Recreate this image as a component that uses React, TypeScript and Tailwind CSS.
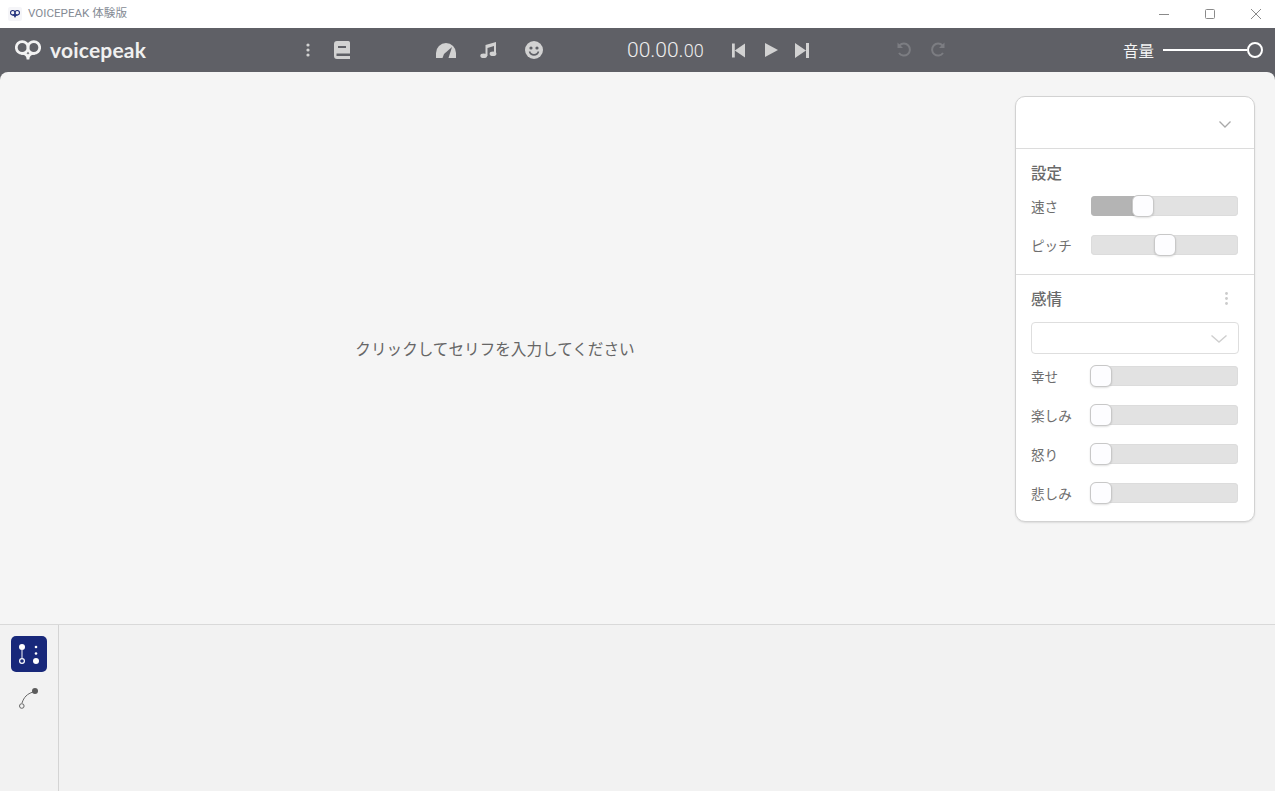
const Logo = ({ className, color }: { className: string; color: string }) => (
  <svg viewBox="0 0 26 21" className={className} fill="none" stroke={color}>
    <circle cx="7.2" cy="7.5" r="5.9" strokeWidth="2.7" />
    <circle cx="18.8" cy="7.5" r="5.9" strokeWidth="2.7" />
    <path d="M7 13.4C10.5 13.4 13 15 13 19.5C13 15 15.5 13.4 19 13.4" strokeWidth="2.7" strokeLinecap="round" />
  </svg>
);

const Slider = ({ left, fill }: { left: string; fill?: string }) => (
  <div className="relative h-5 w-[147px] rounded-[4px] bg-[#e2e2e2] shadow-[inset_0_0_0_1px_#dcdcdc]">
    {fill && <div className={`h-5 rounded-l-[4px] bg-[#b4b4b4] ${fill}`} />}
    <div
      className={`absolute top-[-1px] h-[22px] w-[22px] rounded-[6px] border border-[#c8c8c8] bg-[#fdfdff] shadow-[0_1px_2px_rgba(0,0,0,0.12)] ${left}`}
    />
  </div>
);

const Row = ({ label, left, fill, cls }: { label: string; left: string; fill?: string; cls: string }) => (
  <div className={`flex h-5 items-center ${cls}`}>
    <span className="mb-[1px] w-[60px] whitespace-nowrap text-[13.6px] leading-5 text-[#6e6e6e]">{label}</span>
    <Slider left={left} fill={fill} />
  </div>
);

export default function App() {
  return (
    <div className="flex h-[791px] w-[1275px] flex-col overflow-hidden bg-[#5f6066] font-['Noto_Sans_CJK_JP','Noto_Sans',sans-serif]">
      <div className="flex h-7 items-center bg-white">
        <div className="ml-2 flex h-[14px] w-[14px] items-center justify-center rounded-[2px] bg-[#f5f5f8]">
          <Logo className="h-2 w-[10px]" color="#1b2a78" />
        </div>
        <span className="ml-[6px] font-['Roboto','Noto_Sans_CJK_JP',sans-serif] text-[11.6px] text-[#858b94]">VOICEPEAK 体験版</span>
        <svg viewBox="0 0 110 12" className="ml-auto mr-[6px] h-3 w-[110px]" fill="none" stroke="#8a8a8a" strokeWidth="1">
          <path d="M0 6.5H10" />
          <rect x="46.5" y="1.5" width="9" height="9" rx="1" />
          <path d="M92 1L102 11M102 1L92 11" />
        </svg>
      </div>

      <div className="flex h-11 items-center">
        <Logo className="ml-[15px] h-[21px] w-[26px]" color="#f2f2f2" />
        <span className="mb-[1px] ml-[9px] w-[122px] font-['Lato',sans-serif] text-[21px] font-bold leading-6 tracking-[0.2px] text-[#f0f0f0]">voicepeak</span>
        <svg viewBox="0 0 4 14" className="ml-[134px] h-[14px] w-1" fill="#d2d2d2">
          <circle cx="2" cy="2" r="1.6" />
          <circle cx="2" cy="7" r="1.6" />
          <circle cx="2" cy="12" r="1.6" />
        </svg>
        <svg viewBox="0 0 16 18" className="ml-[24px] h-[18px] w-4">
          <path fill="#d2d2d2" d="M3 0H13.5A2 2 0 0 1 16 2V18H3A3 3 0 0 1 0 15V3A3 3 0 0 1 3 0Z" />
          <path fill="#5f6066" d="M4 5H12V7H4ZM2.5 12.5H16V15H2.5Z" />
        </svg>
        <svg viewBox="0 0 20 15" className="ml-[86px] h-[15px] w-5">
          <path fill="#d2d2d2" d="M0 15V10A10 10 0 0 1 20 10V15Z" />
          <path fill="#5f6066" d="M6.5 15L8 11 16 4 12.5 15Z" />
        </svg>
        <svg viewBox="0 0 17 16" className="ml-[24px] h-4 w-[17px]" fill="#d2d2d2">
          <path d="M5.5 3L16 0V12H14V4L7.5 6V14H5.5Z" />
          <ellipse cx="3.7" cy="13.7" rx="3.4" ry="2.3" />
          <ellipse cx="13" cy="11.7" rx="3.4" ry="2.3" />
        </svg>
        <svg viewBox="0 0 18 18" className="ml-[28px] h-[18px] w-[18px]">
          <circle cx="9" cy="9" r="9" fill="#d2d2d2" />
          <circle cx="6" cy="7" r="1.6" fill="#5f6066" />
          <circle cx="12" cy="7" r="1.6" fill="#5f6066" />
          <path d="M4.5 10.5A4.7 4.7 0 0 0 13.5 10.5" fill="none" stroke="#5f6066" strokeWidth="1.6" />
        </svg>
        <span className="ml-[84px] w-[78px] whitespace-nowrap font-['Roboto',sans-serif] text-[21px] font-light leading-6 text-[#eeeeee]">
          00.00.<span className="text-[18px]">00</span>
        </span>
        <svg viewBox="0 0 14 15" className="ml-[27px] h-[15px] w-[13px]" fill="#d2d2d2">
          <path d="M0 0H3V15H0ZM14 0V15L3 7.5Z" />
        </svg>
        <svg viewBox="0 0 13 14" className="ml-[20px] h-[14px] w-[13px]" fill="#d2d2d2">
          <path d="M0 0L13 7 0 14Z" />
        </svg>
        <svg viewBox="0 0 14 15" className="ml-[17px] h-[15px] w-[14px]" fill="#d2d2d2">
          <path d="M14 0H11V15H14ZM0 0V15L11 7.5Z" />
        </svg>
        <svg viewBox="0 0 16 16" className="ml-[87px] h-4 w-4" fill="none" stroke="#7c7d82" strokeWidth="2">
          <path d="M3.5 3.5A6 6 0 1 1 3 11" />
          <path d="M1.5 0.5V6H7Z" fill="#7c7d82" stroke="none" />
        </svg>
        <svg viewBox="0 0 16 16" className="ml-[18px] h-4 w-4" fill="none" stroke="#7c7d82" strokeWidth="2">
          <path d="M12.5 3.5A6 6 0 1 0 13 11" />
          <path d="M14.5 0.5V6H9Z" fill="#7c7d82" stroke="none" />
        </svg>
        <span className="ml-[177px] w-[40px] text-[15.5px] leading-5 text-[#f5f5f5]">音量</span>
        <div className="h-[2px] w-[84px] bg-white" />
        <div className="h-4 w-4 rounded-full border-2 border-white" />
      </div>

      <div className="flex flex-1 flex-col overflow-hidden rounded-t-[8px] bg-[#f5f5f5]">
        <div className="flex h-[553px] border-b border-[#d9d9d9]">
          <div className="flex h-[552px] w-[990px] items-center justify-center">
            <span className="text-[15.6px] leading-[22px] text-[#666666]">クリックしてセリフを入力してください</span>
          </div>
          <div className="ml-[25px] mt-6 h-[426px] w-[240px] rounded-[10px] border border-[#d2d2d2] bg-white shadow-[0_1px_2px_rgba(0,0,0,0.1)]">
            <div className="flex h-[52px] items-center justify-end border-b border-[#dcdcdc] pr-[23px]">
              <svg viewBox="0 0 12 7" className="mt-[4px] h-[7px] w-3" fill="none" stroke="#a9a9a9" strokeWidth="1.3">
                <path d="M0.5 0.5L6 6 11.5 0.5" />
              </svg>
            </div>
            <div className="h-[126px] border-b border-[#dcdcdc] px-[15px] pt-[12px]">
              <div className="text-[15.5px] font-medium leading-[22px] text-[#6a6a6a]">設定</div>
              <Row label="速さ" left="left-[41px]" fill="w-[45px]" cls="mt-[13px]" />
              <Row label="ピッチ" left="left-[63px]" cls="mt-[19px]" />
            </div>
            <div className="px-[15px] pt-[12px]">
              <div className="flex items-center justify-between">
                <span className="text-[15.5px] font-medium leading-[22px] text-[#6a6a6a]">感情</span>
                <svg viewBox="0 0 3 13" className="mr-[11px] h-[13px] w-[3px]" fill="#cbcbcb">
                  <circle cx="1.5" cy="1.5" r="1.4" />
                  <circle cx="1.5" cy="6.5" r="1.4" />
                  <circle cx="1.5" cy="11.5" r="1.4" />
                </svg>
              </div>
              <div className="mt-[13px] flex h-8 w-[208px] items-center justify-end rounded-[4px] border border-[#dedede] pr-[11px]">
                <svg viewBox="0 0 16 8" className="mt-[1px] h-2 w-4" fill="none" stroke="#cfcfcf" strokeWidth="1.4">
                  <path d="M0.5 0.5L8 7 15.5 0.5" />
                </svg>
              </div>
              <Row label="幸せ" left="left-[-1px]" cls="mt-3" />
              <Row label="楽しみ" left="left-[-1px]" cls="mt-[19px]" />
              <Row label="怒り" left="left-[-1px]" cls="mt-[19px]" />
              <Row label="悲しみ" left="left-[-1px]" cls="mt-[19px]" />
            </div>
          </div>
        </div>
        <div className="flex flex-1 bg-[#f2f2f2]">
          <div className="flex w-[59px] flex-col items-center border-r border-[#d4d4d4] pt-[11px]">
            <div className="flex h-9 w-9 items-center justify-center rounded-[5px] bg-[#18287a]">
              <svg viewBox="0 0 20 20" className="h-5 w-5" fill="#ffffff">
                <circle cx="3" cy="3" r="3" />
                <rect x="2.3" y="6" width="1.4" height="8" fill="#b8bdd8" />
                <circle cx="3" cy="17" r="2.4" fill="none" stroke="#ffffff" strokeWidth="1.2" />
                <circle cx="17" cy="3" r="1.3" />
                <circle cx="17" cy="9.5" r="1.3" />
                <circle cx="17" cy="17" r="3" />
              </svg>
            </div>
            <svg viewBox="0 0 20 22" className="mt-[16px] h-[22px] w-5" fill="none">
              <path d="M3 15C5 9 8 6 14 4" stroke="#666666" strokeWidth="1" />
              <circle cx="2.8" cy="18" r="2.3" stroke="#666666" strokeWidth="1" fill="#f2f2f2" />
              <circle cx="16" cy="3" r="3" fill="#5c5c5c" />
            </svg>
          </div>
        </div>
      </div>
    </div>
  );
}
